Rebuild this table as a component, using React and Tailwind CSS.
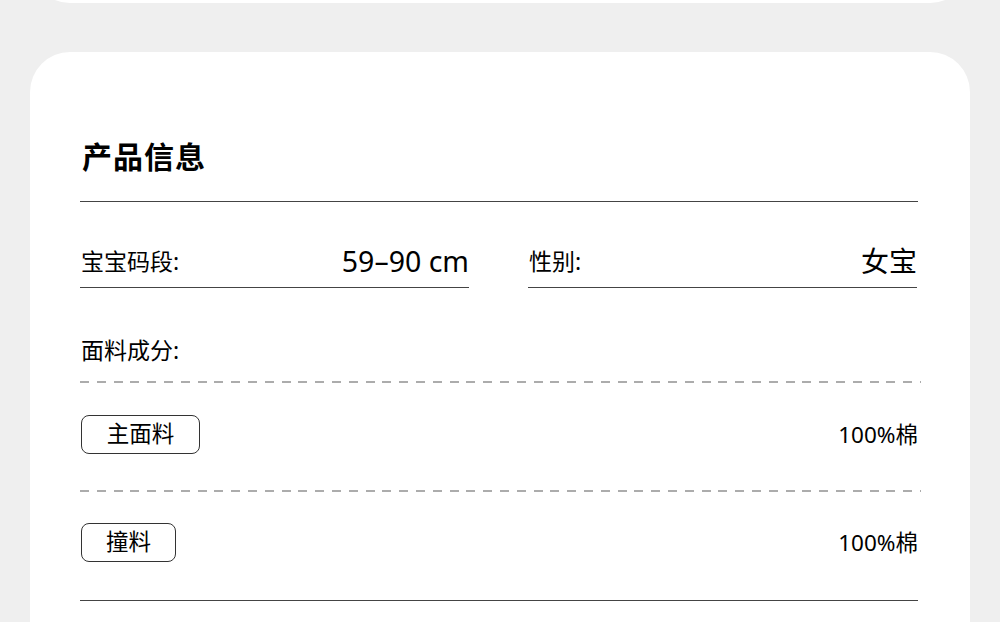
import React from "react";

const font = { fontFamily: '"Noto Sans", "Noto Sans CJK SC", sans-serif' };

function Dashed() {
  return (
    <div className="h-[2px] w-[841px] bg-[image:repeating-linear-gradient(90deg,#acacac_0_9px,transparent_9px_16.8px)]" />
  );
}

function Tag({ children, w }) {
  return (
    <div className={`flex h-[39px] ${w} items-center justify-center rounded-[8px] border border-[#333]`}>
      <span className="text-[22.5px] leading-none text-black">{children}</span>
    </div>
  );
}

export default function App() {
  return (
    <div className="h-[622px] w-[1000px] overflow-hidden bg-[#efefef]" style={font}>
      <div className="mx-[30px] -mt-[100px] h-[103px] rounded-b-[40px] bg-white" />
      <div className="mx-[30px] mt-[49px] h-[700px] rounded-[40px] bg-white px-[50px] pt-[80px]">
        <h1 className="h-[50px] pl-[2px] text-[30px] font-bold leading-[50px] tracking-[1px] text-black">产品信息</h1>
        <div className="mt-[19px] h-[1px] w-[838px] bg-[#444]" />
        <div className="mt-[39px] flex gap-[59px]">
          <div className="w-[389px]">
            <div className="flex h-[40px] items-center justify-between pl-[1px]">
              <span className="text-[23px] text-black">宝宝码段:</span>
              <span className="text-[28.5px] text-black">59–90 cm</span>
            </div>
            <div className="mt-[6px] h-[1px] w-full bg-[#444]" />
          </div>
          <div className="w-[389px]">
            <div className="flex h-[40px] items-center justify-between pl-[1px]">
              <span className="text-[23px] text-black">性别:</span>
              <span className="text-[28px] text-black">女宝</span>
            </div>
            <div className="mt-[6px] h-[1px] w-full bg-[#444]" />
          </div>
        </div>
        <div className="mt-[45px] h-[34px] pl-[1px] text-[23px] leading-[34px] text-black">面料成分:</div>
        <div className="mt-[14px]"><Dashed /></div>
        <div className="mt-[32px] flex w-[838px] items-center justify-between pl-[1px]">
          <Tag w="w-[119px]">主面料</Tag>
          <span className="text-[22.5px] text-black">100%棉</span>
        </div>
        <div className="mt-[36px]"><Dashed /></div>
        <div className="mt-[31px] flex w-[838px] items-center justify-between pl-[1px]">
          <Tag w="w-[95px]">撞料</Tag>
          <span className="text-[22.5px] text-black">100%棉</span>
        </div>
        <div className="mt-[38px] h-[1px] w-[838px] bg-[#444]" />
      </div>
    </div>
  );
}
